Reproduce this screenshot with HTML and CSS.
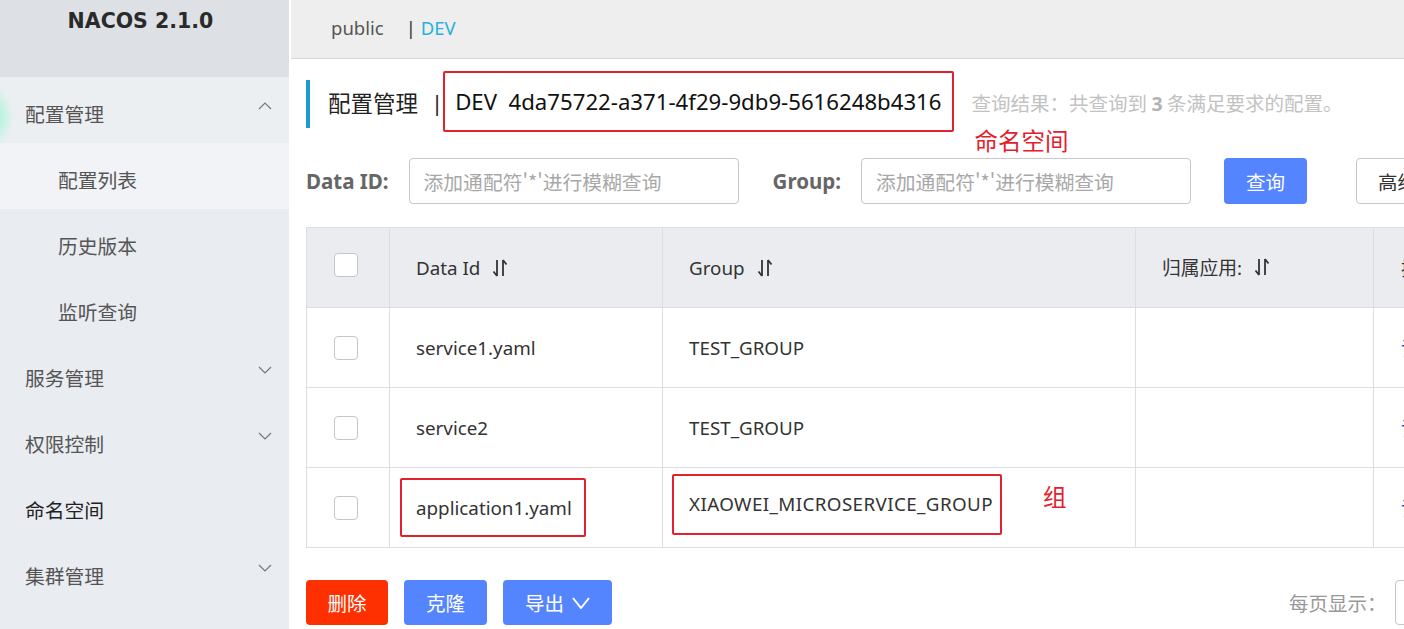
FILE: index.html
```html
<!DOCTYPE html>
<html lang="zh-CN">
<head>
<meta charset="utf-8">
<title>Nacos 配置管理</title>
<link rel="stylesheet" href="styles.css">
</head>
<body>
<div class="app">
  <aside class="sidebar">
    <div class="glow"></div>
    <div class="brand">NACOS 2.1.0</div>
    <nav class="menu">
      <div class="menu-item open"><span>配置管理</span><svg class="chev" viewBox="0 0 14 10" width="14" height="10"><polyline points="1,8 7,2 13,8"/></svg></div>
      <div class="sub-item active">配置列表</div>
      <div class="sub-item">历史版本</div>
      <div class="sub-item">监听查询</div>
      <div class="menu-item"><span>服务管理</span><svg class="chev" viewBox="0 0 14 10" width="14" height="10"><polyline points="1,2 7,8 13,2"/></svg></div>
      <div class="menu-item"><span>权限控制</span><svg class="chev" viewBox="0 0 14 10" width="14" height="10"><polyline points="1,2 7,8 13,2"/></svg></div>
      <div class="menu-item strong"><span>命名空间</span></div>
      <div class="menu-item"><span>集群管理</span><svg class="chev" viewBox="0 0 14 10" width="14" height="10"><polyline points="1,2 7,8 13,2"/></svg></div>
    </nav>
  </aside>
  <main class="main">
    <header class="ns-bar">
      <span class="ns">public</span>
      <span class="ns-sep">|</span>
      <span class="ns ns-active">DEV</span>
    </header>
    <section class="content">
      <div class="title-row">
        <div class="title-bar"></div>
        <span class="title-text">配置管理</span>
        <span class="title-sep">|</span>
        <span class="ns-box">DEV&nbsp;&nbsp;4da75722-a371-4f29-9db9-5616248b4316</span>
        <div class="result">查询结果：共查询到 <b>3</b> 条满足要求的配置。<span class="note note-ns">命名空间</span></div>
      </div>

      <div class="search-row">
        <label class="field-label">Data ID:</label>
        <div class="input"><span class="placeholder">添加通配符'*'进行模糊查询</span></div>
        <label class="field-label group-label">Group:</label>
        <div class="input"><span class="placeholder">添加通配符'*'进行模糊查询</span></div>
        <button class="btn btn-primary btn-query">查询</button>
        <button class="btn btn-normal btn-adv">高级查询</button>
      </div>

      <table class="grid">
        <colgroup>
          <col class="c-check"><col class="c-id"><col class="c-group"><col class="c-app"><col class="c-op">
        </colgroup>
        <thead>
          <tr>
            <th><span class="checkbox"></span></th>
            <th><span class="th-inner">Data Id<svg class="sort" viewBox="0 0 18 22" width="18" height="22"><path d="M6 3v16M6 19L2.5 14.5M12 19V3M12 3l3.5 4.5"/></svg></span></th>
            <th><span class="th-inner">Group<svg class="sort" viewBox="0 0 18 22" width="18" height="22"><path d="M6 3v16M6 19L2.5 14.5M12 19V3M12 3l3.5 4.5"/></svg></span></th>
            <th><span class="th-inner">归属应用:<svg class="sort" viewBox="0 0 18 22" width="18" height="22"><path d="M6 3v16M6 19L2.5 14.5M12 19V3M12 3l3.5 4.5"/></svg></span></th>
            <th class="op">操作</th>
          </tr>
        </thead>
        <tbody>
          <tr>
            <td><span class="checkbox"></span></td>
            <td>service1.yaml</td>
            <td>TEST_GROUP</td>
            <td></td>
            <td class="op link">详情</td>
          </tr>
          <tr>
            <td><span class="checkbox"></span></td>
            <td>service2</td>
            <td>TEST_GROUP</td>
            <td></td>
            <td class="op link">详情</td>
          </tr>
          <tr>
            <td><span class="checkbox"></span></td>
            <td><span class="mark mark-id">application1.yaml</span></td>
            <td><span class="group-cell"><span class="mark mark-group">XIAOWEI_MICROSERVICE_GROUP</span><span class="note note-group">组</span></span></td>
            <td></td>
            <td class="op link">详情</td>
          </tr>
        </tbody>
      </table>

      <div class="footer-row">
        <button class="btn btn-danger">删除</button>
        <button class="btn btn-primary">克隆</button>
        <button class="btn btn-primary btn-export">导出<svg class="down" viewBox="0 0 18 12" width="18" height="12"><polyline points="1,1 9,11 17,1"/></svg></button>
        <div class="pager">
          <span class="pager-label">每页显示：</span>
          <span class="pager-select">10</span>
        </div>
      </div>
    </section>
  </main>
</div>
</body>
</html>
```

FILE: styles.css
```css
* { box-sizing: border-box; }

html, body {
  margin: 0;
  padding: 0;
  width: 1404px;
  height: 629px;
  overflow: hidden;
  background: #ffffff;
  font-family: "Noto Sans", "Noto Sans CJK SC", sans-serif;
  color: #333;
}

.app {
  display: flex;
  height: 629px;
}

/* ---------- sidebar ---------- */
.sidebar {
  position: relative;
  width: 289px;
  flex: none;
  background: #e9ecf0;
  margin-right: 2px;
  overflow: hidden;
}

.glow {
  position: absolute;
  left: -30px;
  top: 84px;
  width: 44px;
  height: 66px;
  border-radius: 50%;
  background: radial-gradient(closest-side, #a8f0d8 0%, #bff3e2 45%, rgba(220, 245, 236, 0) 100%);
  z-index: 1;
}

.brand {
  height: 77px;
  background: #dde1e5;
  text-align: center;
  padding-top: 9px;
  font-family: "DejaVu Sans", sans-serif;
  font-weight: bold;
  font-size: 20.5px;
  color: #2a2a2a;
  padding-right: 8px;
}

.menu {
  display: flex;
  flex-direction: column;
}

.menu-item,
.sub-item {
  height: 66px;
  display: flex;
  align-items: center;
  font-family: "Noto Sans CJK SC", sans-serif;
  font-size: 19.8px;
  color: #555;
  padding-top: 6px;
}

.menu-item {
  padding-left: 25px;
  padding-right: 17px;
  justify-content: space-between;
}

.menu-item.open { background: #eceff2; }
.menu-item.strong { color: #222; }

.sub-item {
  padding-left: 58px;
}

.sub-item.active { background: #f1f3f6; }

.chev {
  fill: none;
  stroke: #777;
  stroke-width: 1.2;
  margin-top: -14px;
}

/* ---------- main ---------- */
.main {
  flex: 1;
  min-width: 0;
  overflow: hidden;
}

.ns-bar {
  height: 59px;
  background: #eeeeee;
  border-bottom: 1px solid #d6d6d6;
  display: flex;
  align-items: center;
  padding-left: 40px;
  font-size: 18.5px;
  padding-bottom: 3px;
}

.ns { color: #555; }
.ns-sep { color: #333; margin-left: 22px; margin-right: 5px; }
.ns-active { color: #26b2dd; }

.content {
  padding-left: 15px;
  width: 1400px;
}

.title-row {
  display: flex;
  align-items: center;
  height: 61px;
  margin-top: 12px;
}

.title-bar {
  width: 4px;
  height: 48px;
  background: #1f9bd4;
  margin-top: 4px;
}

.title-text {
  margin-left: 18px;
  font-family: "Noto Sans CJK SC", sans-serif;
  font-size: 22.5px;
  color: #222;
}

.title-sep {
  margin-left: 13px;
  margin-right: 0;
  font-size: 22px;
  color: #222;
}

.ns-box {
  height: 61px;
  display: flex;
  align-items: center;
  padding: 0 10px 0 10px;
  border: 2px solid #e2212d;
  border-radius: 2px;
  font-size: 22.2px;
  color: #111;
}

.result {
  position: relative;
  margin-left: 18px;
  font-family: "Noto Sans CJK SC", sans-serif;
  font-size: 19.5px;
  color: #c2c2c2;
  padding-top: 2px;
}

.result b { color: #b3b3b3; font-family: "Noto Sans", sans-serif; }

.note {
  color: #e3202b;
  font-family: "Noto Sans CJK SC", sans-serif;
  font-size: 23.5px;
}

.note-ns {
  position: absolute;
  left: 3px;
  top: 37px;
  white-space: nowrap;
}

/* ---------- search ---------- */
.search-row {
  display: flex;
  align-items: center;
  margin-top: 26px;
  height: 46px;
}

.field-label {
  font-weight: bold;
  font-size: 20.5px;
  color: #666;
}

.group-label { margin-left: 34px; }

.input {
  width: 330px;
  height: 46px;
  margin-left: 20px;
  border: 1px solid #c8c8c8;
  border-radius: 4px;
  display: flex;
  align-items: center;
  padding-left: 14px;
}

.placeholder {
  font-family: "Noto Sans CJK SC", sans-serif;
  font-size: 19.8px;
  color: #a8a8a8;
}

.btn {
  height: 46px;
  border: none;
  border-radius: 4px;
  font-family: "Noto Sans CJK SC", sans-serif;
  font-size: 19.5px;
  color: #fff;
  padding: 0;
  display: inline-flex;
  align-items: center;
  justify-content: center;
}

.btn-primary { background: #5584ff; }
.btn-danger { background: #ff3000; }

.btn-query { width: 83px; margin-left: 33px; }

.btn-normal {
  background: #fff;
  color: #333;
  border: 1px solid #c4c6cf;
  width: 120px;
  margin-left: 49px;
  justify-content: flex-start;
  padding-left: 21px;
}

/* ---------- table ---------- */
.grid {
  margin-top: 23px;
  border-collapse: collapse;
  table-layout: fixed;
  width: 1300px;
  font-size: 18.8px;
}

.c-check { width: 83px; }
.c-id { width: 273px; }
.c-group { width: 473px; }
.c-app { width: 238px; }
.c-op { width: 233px; }

.grid th,
.grid td {
  height: 80px;
  border: 1px solid #dcdee3;
  padding: 0 0 0 26px;
  text-align: left;
  vertical-align: middle;
  white-space: nowrap;
  color: #333;
  font-weight: normal;
}

.grid th {
  background: #ebecf0;
}

.grid th:first-child,
.grid td:first-child { padding-left: 27px; }

.grid .op { padding-left: 27px; }
.grid td.link { color: #3b4db3; }

.checkbox {
  display: block;
  width: 24px;
  height: 24px;
  border: 1px solid #c4c6cf;
  border-radius: 4px;
  background: #fff;
}

.grid th .checkbox { margin-top: -6px; }

.th-inner {
  display: inline-flex;
  align-items: center;
  margin-top: -2px;
}

.sort {
  margin-left: 11px;
  fill: none;
  stroke: #333;
  stroke-width: 1.8;
}

.mark {
  display: inline-flex;
  align-items: center;
  border: 2px solid #e2212d;
  border-radius: 2px;
}

.mark-id {
  height: 59px;
  margin-left: -16px;
  padding: 0 12px 0 14px;
}

.group-cell {
  display: inline-flex;
  align-items: center;
}

.mark-group {
  height: 61px;
  margin-left: -17px;
  padding: 0 7px 0 15px;
  margin-top: -7px;
  letter-spacing: 0.4px;
}

.note-group {
  margin-left: 41px;
  margin-top: -24px;
}

/* ---------- footer ---------- */
.footer-row {
  display: flex;
  align-items: center;
  margin-top: 32px;
  height: 45px;
}

.footer-row .btn { height: 45px; }
.footer-row .btn-danger { width: 82px; }
.footer-row .btn-primary { width: 83px; margin-left: 16px; }
.footer-row .btn-export { width: 109px; }

.down {
  margin-left: 8px;
  fill: none;
  stroke: #fff;
  stroke-width: 2;
}

.pager {
  display: flex;
  align-items: center;
  margin-left: 677px;
}

.pager-label {
  font-family: "Noto Sans CJK SC", sans-serif;
  font-size: 19.5px;
  color: #999;
}

.pager-select {
  flex: none;
  margin-left: 8px;
  width: 100px;
  height: 45px;
  border: 1px solid #c4c6cf;
  border-radius: 4px;
  display: flex;
  align-items: center;
  padding-left: 14px;
  color: #333;
  font-size: 18px;
}
```
